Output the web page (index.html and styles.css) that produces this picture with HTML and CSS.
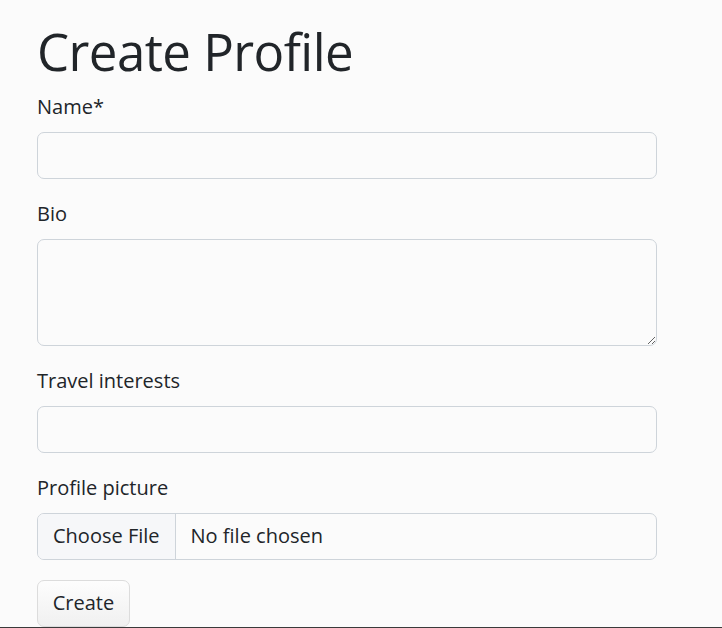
FILE: index.html
```html
<!DOCTYPE html>
<html lang="en">
<head>
<meta charset="utf-8">
<title>Create Profile</title>
<link rel="stylesheet" href="styles.css">
</head>
<body>
<main class="container">
  <h1 class="title">Create Profile</h1>
  <form class="form">
    <div class="field">
      <label class="label" for="name">Name*</label>
      <input class="control" id="name" type="text">
    </div>
    <div class="field">
      <label class="label" for="bio">Bio</label>
      <textarea class="control textarea" id="bio"></textarea>
    </div>
    <div class="field">
      <label class="label" for="travel">Travel interests</label>
      <input class="control" id="travel" type="text">
    </div>
    <div class="field">
      <label class="label">Profile picture</label>
      <div class="control file">
        <span class="file-btn">Choose File</span>
        <span class="file-name">No file chosen</span>
      </div>
    </div>
    <button class="btn" type="button">Create</button>
  </form>
</main>
<div class="edge"></div>
</body>
</html>
```
FILE: styles.css
```css
* { box-sizing: border-box; }
html, body { margin: 0; padding: 0; }
body {
  background: #fbfbfb;
  color: #212529;
  font-family: "Open Sans", "Noto Sans", sans-serif;
  font-size: 20px;
  line-height: 1.5;
  overflow: hidden;
  height: 628px;
}
.container {
  width: 620px;
  margin-left: 37px;
}
.title {
  margin: 21px 0 8px;
  font-size: 51px;
  font-weight: 400;
  line-height: 1.2;
  letter-spacing: -0.55px;
}
.form { display: flex; flex-direction: column; }
.field { display: flex; flex-direction: column; margin-bottom: 18px; }
.label { display: block; padding-top: 2px; margin-bottom: 10px; }
.control {
  display: block;
  width: 100%;
  height: 47px;
  border: 1px solid #ced4da;
  border-radius: 7px;
  background: #fbfbfb;
  font: inherit;
  color: inherit;
  padding: 0 19px;
}
.textarea { height: 107px; resize: vertical; }
.file {
  display: flex;
  align-items: stretch;
  padding: 0;
  overflow: hidden;
}
.file-btn {
  display: flex;
  align-items: center;
  padding: 0 15px 2px;
  background: #f6f7f9;
  border-right: 1px solid #ced4da;
}
.file-name {
  display: flex;
  align-items: center;
  padding: 0 15px 2px;
}
.btn {
  align-self: flex-start;
  width: 93px;
  height: 47px;
  margin-top: 2px;
  border: 1px solid #dcdcdc;
  border-radius: 7px;
  background: linear-gradient(#fdfdfd, #f0f0f0);
  font: inherit;
  color: inherit;
  padding: 0 0 2px;
}
.edge {
  position: fixed;
  left: 0;
  right: 0;
  bottom: 0;
  height: 1px;
  background: #3a3a3a;
}
```
